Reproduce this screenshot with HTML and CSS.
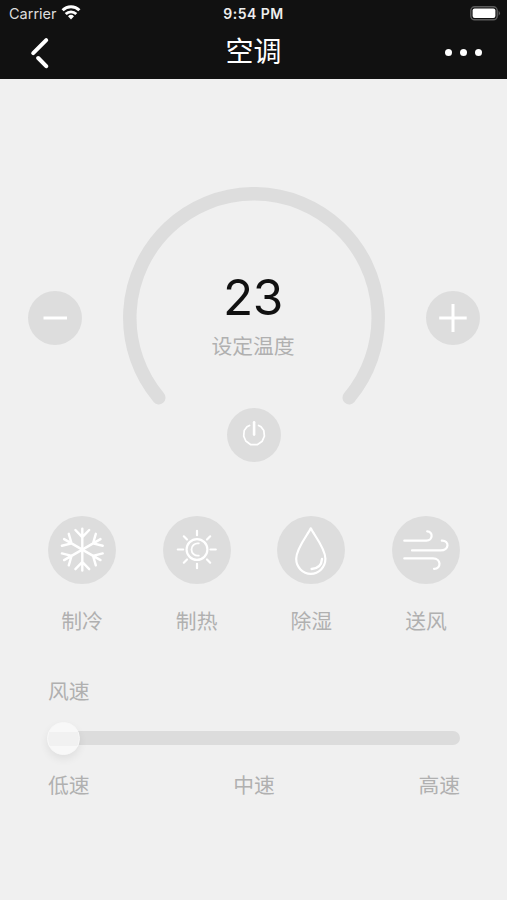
FILE: index.html
```html
<!DOCTYPE html>
<html lang="zh-CN">
<head>
  <meta charset="UTF-8">
  <meta name="viewport" content="width=device-width, initial-scale=1.0">
  <title>空调</title>
  <link rel="stylesheet" href="styles.css">
</head>
<body>

  <header class="header">
    <div class="status-bar">
      <div class="carrier">
        <span>Carrier</span>
        <svg width="20" height="16" viewBox="0 0 20 16">
          <g fill="none" stroke="#fff" stroke-width="3">
            <path d="M1.6 6.2a12 12 0 0 1 16.8 0"/>
            <path d="M4.7 10a7.6 7.6 0 0 1 10.6 0" stroke-width="2.8"/>
          </g>
          <path d="M10 15.4l-3-3.2a4.3 4.3 0 0 1 6 0z" fill="#fff"/>
        </svg>
      </div>
      <div class="time">9:54 PM</div>
      <svg class="battery" width="31" height="15" viewBox="0 0 31 15">
        <rect x="0.8" y="0.8" width="26.4" height="13" rx="3.8" fill="none" stroke="#5c5c5c" stroke-width="1.4"/>
        <rect x="2.6" y="2.6" width="22.8" height="9.4" rx="2" fill="#fff"/>
        <path d="M28.6 4.8q2.8 2.5 0 5z" fill="#5c5c5c"/>
      </svg>
    </div>

    <div class="nav">
      <svg class="back" width="20" height="32" viewBox="0 0 20 32" fill="none" stroke="#fff" stroke-width="4" stroke-linecap="round">
        <path d="M16.2 3.2L3.2 16.2"/>
        <path d="M8.2 21L16.2 29.2"/>
      </svg>
      <h1>空调</h1>
      <div class="more"><i></i><i></i><i></i></div>
    </div>
  </header>

  <main class="panel">

    <!-- Temperature -->
    <div class="temp">
      <button class="round-btn temp-btn">
        <svg width="54" height="54" viewBox="0 0 54 54">
          <path d="M15.5 27h23.5" stroke="#fff" stroke-width="3"/>
        </svg>
      </button>
      <div class="dial">
        <svg width="262" height="219" viewBox="0 0 262 219">
          <path d="M35.8 210.7A124.2 124.2 0 1 1 226.2 210.7" fill="none" stroke="#dddddd" stroke-width="13.5" stroke-linecap="round"/>
        </svg>
        <div class="dial-text">
          <div class="temp-value">23</div>
          <div class="temp-label">设定温度</div>
        </div>
      </div>
      <button class="round-btn temp-btn">
        <svg width="54" height="54" viewBox="0 0 54 54">
          <path d="M13.2 27h27.5M27 13v28" stroke="#fff" stroke-width="3"/>
        </svg>
      </button>
    </div>

    <button class="round-btn power">
      <svg width="54" height="54" viewBox="0 0 54 54" fill="none" stroke="#fff" stroke-linecap="round">
        <path d="M22.6 17.4L20 18.8L17.2 22.6L16.7 28.2L18.8 33L23.8 36.7H30.2L35.2 33.2L37.4 28.2L36.8 22.6L34 18.8L31.6 17.4" stroke-width="1.7" stroke-linejoin="round"/>
        <path d="M27.1 14.2v12.4" stroke-width="2.6"/>
      </svg>
    </button>

    <!-- Modes -->
    <div class="modes">
      <div class="mode">
        <svg class="mode-icon" viewBox="0 0 68 68" fill="none" stroke="#fff" stroke-width="2.4" stroke-linecap="round">
          <path id="arm" d="M34.3 33.6V12.6M27.4 14L34.3 21.2L41.2 14"/>
          <use href="#arm" transform="rotate(60 34.3 33.6)"/>
          <use href="#arm" transform="rotate(120 34.3 33.6)"/>
          <use href="#arm" transform="rotate(180 34.3 33.6)"/>
          <use href="#arm" transform="rotate(240 34.3 33.6)"/>
          <use href="#arm" transform="rotate(300 34.3 33.6)"/>
        </svg>
        <span>制冷</span>
      </div>
      <div class="mode">
        <svg class="mode-icon" viewBox="0 0 68 68" fill="none" stroke="#fff" stroke-width="2.2" stroke-linecap="round">
          <circle cx="34" cy="33.5" r="10.4"/>
          <path d="M35.8 27.4A6.2 6.2 0 1 0 35.8 39.6" stroke-width="1.8"/>
          <path d="M34 14.8v4.4M34 47.8v4.4M14.8 33.5h5.4M47.4 33.5h5.4M20.8 20.3l3.2 3.2M44 43.5l3.2 3.2M20.8 46.7l3.2-3.2M44 23.5l3.2-3.2"/>
        </svg>
        <span>制热</span>
      </div>
      <div class="mode">
        <svg class="mode-icon" viewBox="0 0 68 68" fill="none" stroke="#fff" stroke-width="2.2" stroke-linecap="round" stroke-linejoin="round">
          <path d="M33.8 12.3C31 18.5 19.2 32 19.2 42.8A14.6 15 0 0 0 48.4 42.8C48.4 32 36.6 18.5 33.8 12.3Z"/>
          <path d="M45 43C44.6 49 40.6 52.6 34.6 53" stroke-width="2.4"/>
        </svg>
        <span>除湿</span>
      </div>
      <div class="mode">
        <svg class="mode-icon" viewBox="0 0 68 68" fill="none" stroke="#fff" stroke-width="2.2" stroke-linecap="round">
          <path d="M12.3 24.7H34.5C40.8 24.7 41.6 15.6 35.2 15.4"/>
          <path d="M20 34.4H48.5C57.6 34.4 57.6 24.2 49.8 24.6"/>
          <path d="M12.3 42.4H41C49.4 42.4 49.6 53 42 52.8"/>
        </svg>
        <span>送风</span>
      </div>
    </div>

    <!-- Fan speed -->
    <div class="speed">
      <div class="speed-title">风速</div>
      <div class="slider">
        <div class="thumb"></div>
      </div>
      <div class="speed-labels">
        <span>低速</span>
        <span>中速</span>
        <span>高速</span>
      </div>
    </div>

  </main>

</body>
</html>
```
FILE: styles.css
```css
* {
  box-sizing: border-box;
}
body {
  margin: 0;
  min-height: 900px;
  background-color: #f0f0f0;
  color: #b0b0b0;
  font-family: Inter, "Noto Sans CJK SC", sans-serif;
  font-size: 20.8px;
  font-weight: 400;
}
svg {
  display: block;
}
.header {
  height: 79px;
  background-color: #111111;
  color: #fff;
}
.status-bar {
  display: grid;
  grid-template-columns: 1fr auto 1fr;
  align-items: center;
  height: 27px;
  padding: 0 6px 0 9px;
  font-size: 14.5px;
}
.carrier {
  display: flex;
  align-items: center;
  gap: 5px;
  color: #dddddd;
}
.carrier svg {
  margin: -4px 0 0 -1px;
}
.time {
  margin-right: 3px;
  font-size: 14px;
  font-weight: 600;
  letter-spacing: 0.5px;
  color: #eeeeee;
}
.battery {
  justify-self: end;
}
.nav {
  display: grid;
  grid-template-columns: 1fr auto 1fr;
  align-items: center;
  height: 48px;
  padding: 0 25px 0 30px;
}
.nav h1 {
  margin: 2px 5px 0 0;
  font-size: 28px;
  font-weight: 400;
  line-height: 44px;
}
.back {
  margin-top: 3px;
}
.more {
  display: flex;
  justify-content: flex-end;
  gap: 8px;
  margin-top: 3px;
}
.more i {
  width: 7px;
  height: 7px;
  border-radius: 50%;
  background-color: #fff;
}
.panel {
  padding-top: 108px;
}
.round-btn {
  display: block;
  width: 54px;
  height: 54px;
  padding: 0;
  border: none;
  border-radius: 50%;
  background-color: #dddddd;
}
.temp {
  display: flex;
  justify-content: space-between;
  padding: 0 27px 0 28px;
}
.temp-btn {
  margin-top: 104px;
}
.dial {
  display: grid;
}
.dial svg,
.dial-text {
  grid-area: 1 / 1;
}
.dial-text {
  padding: 80px 2px 0 0;
  text-align: center;
}
.temp-value {
  font-size: 49.5px;
  font-weight: 400;
  line-height: 60px;
  letter-spacing: -0.5px;
  color: #111111;
}
.temp-label {
  margin-top: 5px;
  line-height: 30px;
}
.power {
  margin: 2px auto 0;
}
.modes {
  display: flex;
  justify-content: space-between;
  margin-top: 54px;
  padding: 0 47px 0 48px;
}
.mode {
  text-align: center;
}
.mode-icon {
  width: 68px;
  height: 68px;
  margin-bottom: 23px;
  border-radius: 50%;
  background-color: #dddddd;
}
.mode span {
  display: block;
  line-height: 30px;
}
.speed {
  margin-top: 40px;
  padding: 0 47px 0 48px;
}
.speed-title {
  line-height: 30px;
}
.slider {
  display: flex;
  align-items: center;
  height: 14px;
  margin-top: 24px;
  border-radius: 7px;
  background-color: #dcdcdc;
}
.thumb {
  flex: none;
  width: 33px;
  height: 33px;
  margin-left: -1px;
  border-radius: 50%;
  border: 1px solid #f8f8f8;
  background: linear-gradient(#f8f8f8 9px, #f1f1f1 9px, #f1f1f1 23px, #f8f8f8 23px);
  box-shadow: 0 4px 8px rgba(0, 0, 0, 0.07);
}
.speed-labels {
  display: flex;
  justify-content: space-between;
  margin-top: 26px;
  line-height: 30px;
}
```
